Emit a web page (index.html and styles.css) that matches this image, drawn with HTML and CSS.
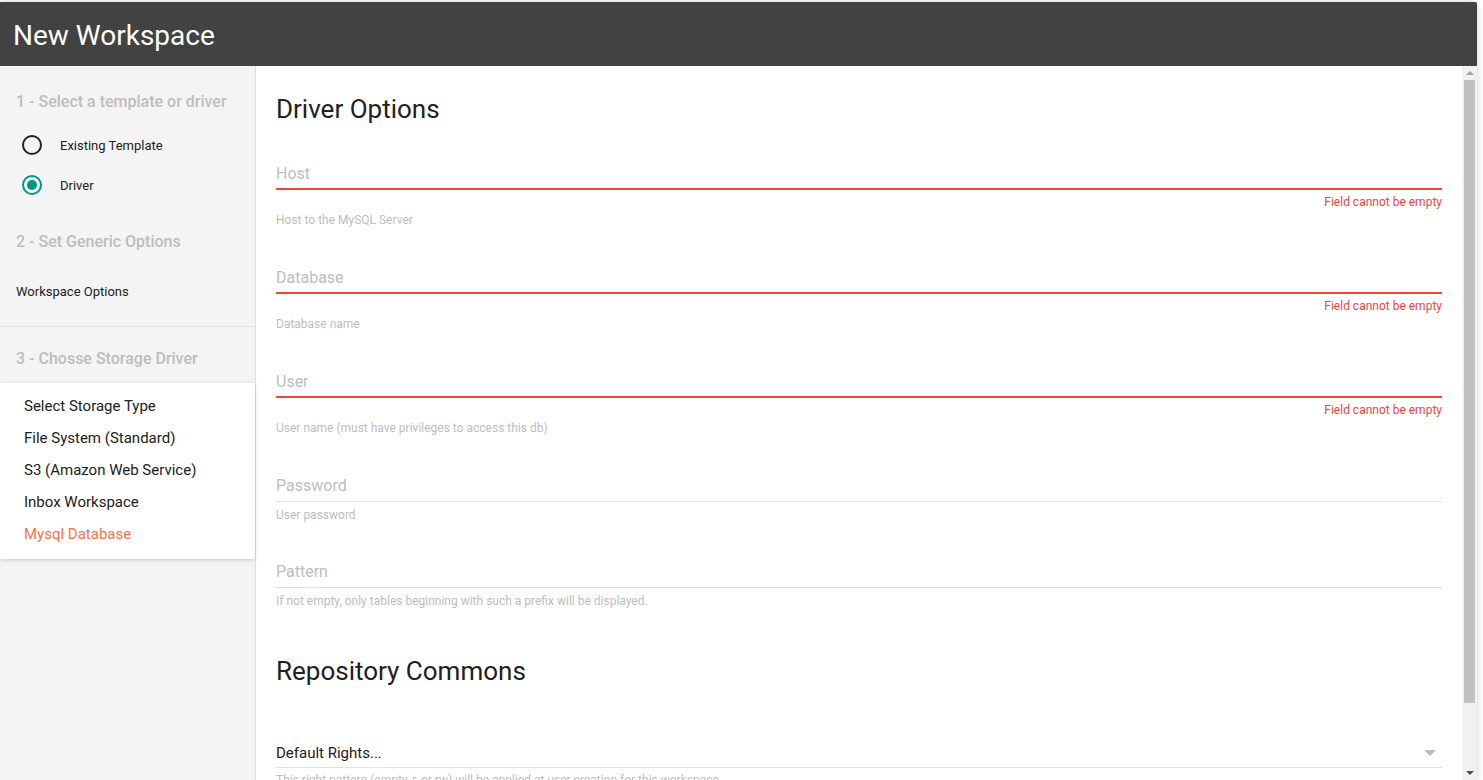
FILE: index.html
```html
<!DOCTYPE html>
<html lang="en">
<head>
    <meta charset="UTF-8">
    <title>New Workspace</title>
    <link rel="stylesheet" href="styles.css">
</head>
<body>
    <div class="dialog">
        <div class="dialog-header">New Workspace</div>
        <div class="dialog-body">
            <div class="sidebar">
                <div class="step-title first">1 - Select a template or driver</div>
                <label class="radio-row">
                    <span class="radio"></span>
                    <span class="radio-label">Existing Template</span>
                </label>
                <label class="radio-row">
                    <span class="radio checked"></span>
                    <span class="radio-label">Driver</span>
                </label>

                <div class="step-title second">2 - Set Generic Options</div>
                <div class="step-link">Workspace Options</div>
                <div class="divider"></div>

                <div class="step-title third">3 - Chosse Storage Driver</div>
                <ul class="menu">
                    <li>Select Storage Type</li>
                    <li>File System (Standard)</li>
                    <li>S3 (Amazon Web Service)</li>
                    <li>Inbox Workspace</li>
                    <li class="selected">Mysql Database</li>
                </ul>
            </div>

            <div class="content">
                <h2 class="section-title">Driver Options</h2>

                <div class="field invalid">
                    <div class="field-label">Host</div>
                    <div class="field-line"></div>
                    <div class="field-error">Field cannot be empty</div>
                    <div class="field-hint">Host to the MySQL Server</div>
                </div>
                <div class="field invalid">
                    <div class="field-label">Database</div>
                    <div class="field-line"></div>
                    <div class="field-error">Field cannot be empty</div>
                    <div class="field-hint">Database name</div>
                </div>
                <div class="field invalid">
                    <div class="field-label">User</div>
                    <div class="field-line"></div>
                    <div class="field-error">Field cannot be empty</div>
                    <div class="field-hint">User name (must have privileges to access this db)</div>
                </div>
                <div class="field">
                    <div class="field-label">Password</div>
                    <div class="field-line"></div>
                    <div class="field-hint">User password</div>
                </div>
                <div class="field">
                    <div class="field-label">Pattern</div>
                    <div class="field-line"></div>
                    <div class="field-hint">If not empty, only tables beginning with such a prefix will be displayed.</div>
                </div>

                <h2 class="section-title commons">Repository Commons</h2>

                <div class="field select-field">
                    <div class="select-value">
                        <span>Default Rights...</span>
                        <span class="caret"></span>
                    </div>
                    <div class="field-line"></div>
                    <div class="field-hint">This right pattern (empty, r, or rw) will be applied at user creation for this workspace.</div>
                </div>
            </div>

            <div class="scrollbar">
                <div class="sb-button"><span class="arrow-up"></span></div>
                <div class="sb-track"><div class="sb-thumb"></div></div>
                <div class="sb-button"><span class="arrow-down"></span></div>
            </div>
        </div>
    </div>
</body>
</html>
```

FILE: styles.css
```css
body {
    margin: 0;
    padding-top: 2px;
    font-family: Roboto, "Noto Sans", sans-serif;
    background-color: #fff;
    color: #212121;
    overflow: hidden;
}
.dialog {
    width: 1477px;
    height: 778px;
    display: flex;
    flex-direction: column;
    background-color: #fff;
    border-top-right-radius: 2px;
    box-shadow: 0 0 6px rgba(0, 0, 0, 0.2);
}
.dialog-header {
    height: 64px;
    line-height: 68px;
    padding-left: 13px;
    background-color: #424242;
    color: #fff;
    font-size: 28px;
    border-top-right-radius: 2px;
    flex-shrink: 0;
}
.dialog-body {
    flex: 1;
    display: flex;
    min-height: 0;
}

/* linke Spalte */
.sidebar {
    width: 255px;
    flex-shrink: 0;
    background-color: #f4f4f4;
    border-right: 1px solid #e0e0e0;
}
.step-title {
    font-size: 16px;
    font-weight: 500;
    line-height: 20px;
    color: #bdbdbd;
    padding-left: 16px;
}
.step-title.first {
    margin-top: 26px;
    margin-bottom: 13px;
}
.step-title.second {
    margin-top: 27px;
}
.step-title.third {
    margin-top: 22px;
    margin-bottom: 14px;
}
.radio-row {
    display: flex;
    align-items: center;
    height: 40px;
    padding-left: 22px;
}
.radio {
    width: 16px;
    height: 16px;
    border: 2px solid #212121;
    border-radius: 50%;
    position: relative;
    flex-shrink: 0;
}
.radio.checked {
    border-color: #009688;
}
.radio.checked::after {
    content: "";
    position: absolute;
    left: 3px;
    top: 3px;
    width: 10px;
    height: 10px;
    border-radius: 50%;
    background-color: #009688;
}
.radio-label {
    margin-left: 18px;
    font-size: 13px;
}
.step-link {
    font-size: 13px;
    line-height: 20px;
    padding-left: 16px;
    margin-top: 30px;
}
.divider {
    height: 1px;
    background-color: #e0e0e0;
    margin-top: 24px;
}
.menu {
    list-style-type: none;
    margin: 0;
    padding: 7px 0 9px;
    background-color: #fff;
    border-radius: 2px;
    box-shadow: 0 1px 4px rgba(0, 0, 0, 0.18);
}
.menu li {
    font-size: 15px;
    line-height: 32px;
    padding-left: 24px;
}
.menu li.selected {
    color: #ff7043;
}

/* Formular */
.content {
    flex: 1;
    overflow: hidden;
    padding: 0 20px;
}
.section-title {
    font-size: 26px;
    font-weight: 400;
    line-height: 32px;
    margin: 27px 0 39px;
}
.section-title.commons {
    margin: 46px 0 56px;
}
.field {
    margin-bottom: 39px;
}
.field.invalid {
    margin-bottom: 40px;
}
.field-label {
    font-size: 16px;
    line-height: 20px;
    color: #bdbdbd;
    padding-bottom: 5px;
}
.field-line {
    height: 1px;
    background-color: #e0e0e0;
}
.field.invalid .field-label {
    padding-bottom: 4px;
}
.field.invalid .field-line {
    height: 2px;
    background-color: #f44336;
}
.field-error {
    font-size: 12px;
    line-height: 14px;
    color: #f44336;
    text-align: right;
    margin-top: 5px;
}
.field-hint {
    font-size: 12px;
    line-height: 16px;
    color: #bdbdbd;
    margin-top: 5px;
}
.field.invalid .field-hint {
    margin-top: 3px;
}
.field.select-field {
    margin-bottom: 0;
}
.select-value {
    display: flex;
    justify-content: space-between;
    align-items: center;
    font-size: 15px;
    line-height: 20px;
    padding-bottom: 4px;
}
.caret {
    width: 0;
    height: 0;
    border-left: 6px solid transparent;
    border-right: 6px solid transparent;
    border-top: 6px solid #bdbdbd;
    margin-right: 6px;
}
.select-field .field-hint {
    margin-top: 4px;
}

/* Bildlaufleiste */
.scrollbar {
    width: 15px;
    flex-shrink: 0;
    display: flex;
    flex-direction: column;
    background-color: #f1f1f1;
}
.sb-button {
    height: 14px;
    display: flex;
    align-items: center;
    justify-content: center;
    flex-shrink: 0;
}
.sb-track {
    flex: 1;
    padding: 0 2px;
}
.sb-thumb {
    height: 623px;
    background-color: #c1c1c1;
}
.arrow-up {
    width: 0;
    height: 0;
    border-left: 4px solid transparent;
    border-right: 4px solid transparent;
    border-bottom: 4px solid #a3a3a3;
}
.arrow-down {
    width: 0;
    height: 0;
    border-left: 4px solid transparent;
    border-right: 4px solid transparent;
    border-top: 4px solid #505050;
}
```
